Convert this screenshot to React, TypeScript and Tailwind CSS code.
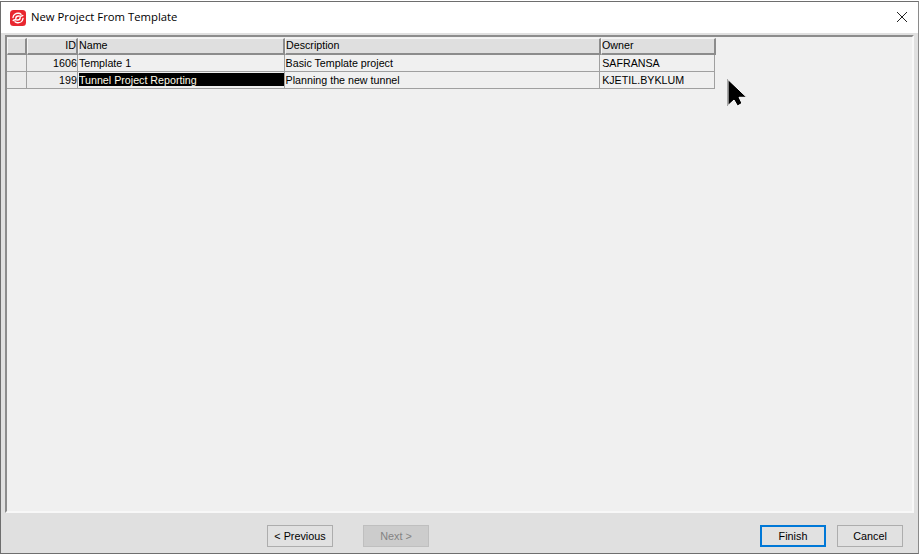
const columns = [
  { label: '', width: 'w-[20px]' },
  { label: 'ID', width: 'w-[51px]', right: true },
  { label: 'Name', width: 'w-[207px]' },
  { label: 'Description', width: 'w-[316px]' },
  { label: 'Owner', width: 'w-[115px]' },
];

const rows = [
  ['', '1606', 'Template 1', 'Basic Template project', 'SAFRANSA'],
  ['', '199', 'Tunnel Project Reporting', 'Planning the new tunnel', 'KJETIL.BYKLUM'],
];

function Logo() {
  return (
    <svg width="16" height="16" viewBox="0 0 16 16" className="shrink-0">
      <rect width="16" height="16" rx="3.5" fill="#e8262f" />
      <path d="M3 7.5C3.4 4.8 5.8 3 8.6 3.3C9.6 3.4 10.4 3.7 11 4.2M13 8.5C12.6 11.2 10.2 13 7.4 12.7C6.4 12.6 5.6 12.3 5 11.8M5.8 8.6C5.8 6.8 7.2 6 8.6 6C10 6 11.6 6.8 12.8 5.6M10.2 7.4C10.2 9.2 8.8 10 7.4 10C6 10 4.4 9.2 3.2 10.4" fill="none" stroke="#fff" strokeWidth="1.4" strokeLinecap="round" />
    </svg>
  );
}

function Pointer() {
  return (
    <svg width="22" height="30" viewBox="0 0 22 30" className="absolute left-[727px] top-[78px]">
      <path d="M1 1.5L19.7 19.3H12L15 25.3L10.5 28L7 22L1 27.5Z" fill="#000" stroke="#fff" strokeWidth="1" />
      <path d="M0.5 1V28" stroke="#a8a8a8" strokeWidth="1" />
    </svg>
  );
}

function Button({ label, disabled, primary }: { label: string; disabled?: boolean; primary?: boolean }) {
  return (
    <button
      className={
        'w-[66px] h-[22px] flex items-center justify-center text-[10.8px] ' +
        (disabled
          ? 'bg-[#cccccc] border border-[#bfbfbf] text-[#838383]'
          : primary
            ? 'bg-[#e1e1e1] border-2 border-[#0078d7] text-black'
            : 'bg-[#e1e1e1] border border-[#adadad] text-black')
      }
    >
      {label}
    </button>
  );
}

export default function App() {
  return (
    <div className="relative w-[919px] h-[555px] bg-white font-['Liberation_Sans',Arial,sans-serif] pt-px">
      <div className="h-[553px] flex flex-col border border-[#6e6e6e] border-r-[#8a8a8a] bg-[#e0e0e0]">
        {/* title bar */}
        <div className="h-[31px] shrink-0 bg-white flex items-center pl-[9px] pr-[10px] gap-[5px]">
          <Logo />
          <span className="text-[11.3px] text-black font-['Open_Sans',sans-serif] leading-none -mt-px">New Project From Template</span>
          <svg width="12" height="12" viewBox="0 0 12 12" className="ml-auto -mt-px">
            <path d="M1 1L11 11M11 1L1 11" stroke="#222" strokeWidth="1" />
          </svg>
        </div>

        {/* grid area */}
        <div className="flex-1 min-h-0 mt-[2px] mx-[4px] bg-[#f0f0f0] border-t-2 border-l-2 border-[#8c8c8c] border-r-2 border-r-[#f8f8f8] border-b-2 border-b-[#f8f8f8] mb-px overflow-hidden pt-px">
          <div className="flex h-[17px] w-[709px] text-[10.7px] text-black">
            {columns.map((col, i) => (
              <div
                key={i}
                className={
                  'h-full bg-[#dfdfdf] border-t border-t-[#f4f4f4] border-l border-l-[#f4f4f4] border-r-2 border-r-[#8c8c8c] border-b-2 border-b-[#8c8c8c] leading-[13px] truncate ' +
                  col.width +
                  (col.right ? ' text-right' : '')
                }
              >
                {col.label}
              </div>
            ))}
          </div>
          {rows.map((row, r) => (
            <div key={r} className="flex h-[17px] w-[708px] text-[10.7px] text-black">
              {row.map((cell, c) => {
                const selected = r === 1 && c === 2;
                return (
                  <div
                    key={c}
                    className={
                      'h-full border-r border-b border-[#a0a0a0] leading-[16px] truncate ' +
                      columns[c].width +
                      (c < 2 ? ' bg-[#ececec]' : '') +
                      (columns[c].right ? ' text-right' : c === 4 ? ' pl-[2px]' : ' pl-px')
                    }
                  >
                    {selected ? (
                      <div className="h-[13px] mt-px bg-black text-[#fffbe8] leading-[14px]">{cell}</div>
                    ) : (
                      cell
                    )}
                  </div>
                );
              })}
            </div>
          ))}
        </div>

        {/* footer */}
        <div className="h-[39px] shrink-0 flex items-start pt-[11px] pl-[266px]">
          <Button label="< Previous" />
          <div className="ml-[30px]">
            <Button label="Next >" disabled />
          </div>
          <div className="ml-[331px]">
            <Button label="Finish" primary />
          </div>
          <div className="ml-[11px]">
            <Button label="Cancel" />
          </div>
        </div>
      </div>
      <Pointer />
    </div>
  );
}
